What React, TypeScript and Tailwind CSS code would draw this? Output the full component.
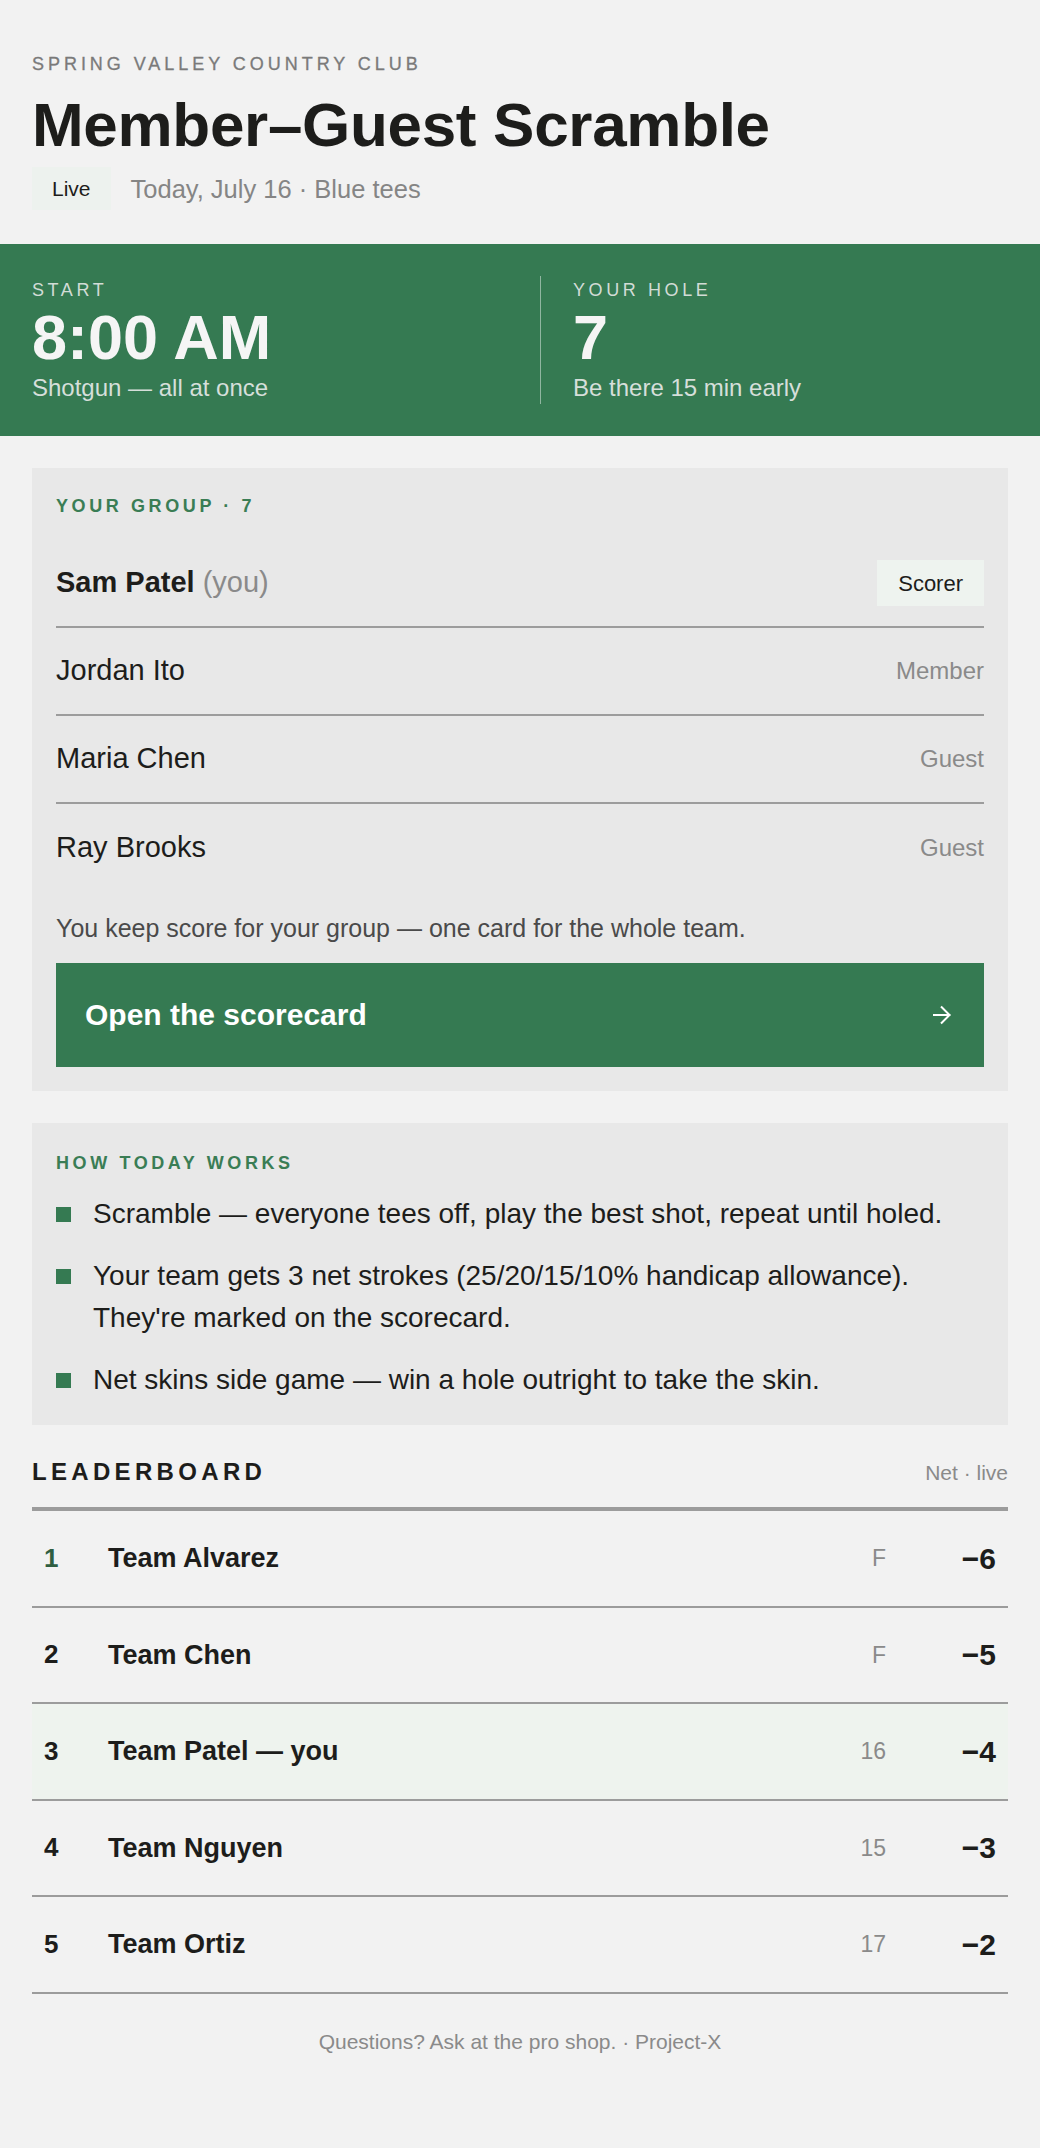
import React from 'react';

const group = [
  { name: 'Sam Patel', you: true, role: 'Scorer' },
  { name: 'Jordan Ito', role: 'Member' },
  { name: 'Maria Chen', role: 'Guest' },
  { name: 'Ray Brooks', role: 'Guest' },
];

const rules = [
  'Scramble — everyone tees off, play the best shot, repeat until holed.',
  "Your team gets 3 net strokes (25/20/15/10% handicap allowance). They're marked on the scorecard.",
  'Net skins side game — win a hole outright to take the skin.',
];

const board = [
  { pos: 1, team: 'Team Alvarez', thru: 'F', score: '−6' },
  { pos: 2, team: 'Team Chen', thru: 'F', score: '−5' },
  { pos: 3, team: 'Team Patel — you', thru: '16', score: '−4', me: true },
  { pos: 4, team: 'Team Nguyen', thru: '15', score: '−3' },
  { pos: 5, team: 'Team Ortiz', thru: '17', score: '−2' },
];

function ArrowIcon() {
  return (
    <svg width="20" height="20" viewBox="0 0 20 20" fill="none" stroke="currentColor" strokeWidth="2">
      <path d="M1 10h17.5M9 1.5l8.5 8.5-8.5 8.5" />
    </svg>
  );
}

export default function App() {
  return (
    <div className="min-h-screen bg-[#f2f2f2] text-[#1d1d1b] font-['Liberation_Sans',Arial,sans-serif] pb-20">
      {/* header */}
      <header className="px-8 pt-[51px]">
        <p className="text-[18px] leading-[27px] tracking-[0.22em] text-[#7a7a7a] uppercase [-webkit-text-stroke:0.3px_#7a7a7a]">
          Spring Valley Country Club
        </p>
        <h1 className="mt-[13px] text-[62px] leading-[1.1] font-bold tracking-[-0.005em]">
          Member–Guest Scramble
        </h1>
        <div className="mt-[8px] flex items-center gap-5">
          <span className="h-[43px] px-5 flex items-center bg-[#edf2ee] text-[21px]">Live</span>
          <span className="text-[25.5px] text-[#858585]">Today, July 16 · Blue tees</span>
        </div>
      </header>

      {/* tee time banner */}
      <section className="mt-[34px] bg-[#357a52] px-8 py-8">
        <div className="grid grid-cols-2 gap-10">
          <div>
            <p className="text-[18px] leading-[29px] tracking-[0.2em] text-[#d2dcd6]">START</p>
            <p className="mt-px text-[63px] leading-[62px] font-bold text-[#f5f5f5]">8:00 AM</p>
            <p className="mt-[3px] text-[24px] leading-[33px] text-[#d6dfda]">Shotgun — all at once</p>
          </div>
          <div className="border-l border-white/45 pl-8">
            <p className="text-[18px] leading-[29px] tracking-[0.2em] text-[#d2dcd6]">YOUR HOLE</p>
            <p className="mt-px text-[63px] leading-[62px] font-bold text-[#f5f5f5]">7</p>
            <p className="mt-[3px] text-[24px] leading-[33px] text-[#d6dfda]">Be there 15 min early</p>
          </div>
        </div>
      </section>

      <main className="px-8">
        {/* group */}
        <section className="mt-8 bg-[#e8e8e8] p-6">
          <p className="text-[18px] leading-[28px] tracking-[0.2em] font-bold text-[#3a7d55]">YOUR GROUP · 7</p>
          <ul className="mt-5">
            {group.map((p, i) => (
              <li
                key={p.name}
                className={`flex items-center justify-between h-[88px] ${i < group.length - 1 ? 'border-b-2 border-[#9c9c9c]' : ''}`}
              >
                <span className="text-[29px]">
                  {p.you ? (
                    <>
                      <span className="font-bold">{p.name}</span>{' '}
                      <span className="text-[#8a8a8a]">(you)</span>
                    </>
                  ) : (
                    p.name
                  )}
                </span>
                {p.role === 'Scorer' ? (
                  <span className="h-[46px] px-[21px] flex items-center bg-[#eef3ef] text-[22px]">Scorer</span>
                ) : (
                  <span className="text-[24px] text-[#8a8a8a]">{p.role}</span>
                )}
              </li>
            ))}
          </ul>
          <p className="mt-[18px] text-[25px] leading-[1.5] text-[#4a4a4a]">
            You keep score for your group — one card for the whole team.
          </p>
          <button className="mt-[15px] w-full h-[104px] pl-[29px] pr-8 flex items-center justify-between bg-[#357a52] text-white">
            <span className="text-[30px] font-bold">Open the scorecard</span>
            <ArrowIcon />
          </button>
        </section>

        {/* how it works */}
        <section className="mt-8 bg-[#e8e8e8] p-6">
          <p className="mt-[2px] text-[18px] leading-[28px] tracking-[0.2em] font-bold text-[#3a7d55]">HOW TODAY WORKS</p>
          <ul className="mt-[16px] flex flex-col gap-5">
            {rules.map((r) => (
              <li key={r} className="flex items-start gap-[22px]">
                <span className="mt-[14px] w-[15px] h-[15px] shrink-0 bg-[#357a52]" />
                <span className="text-[28px] leading-[42px]">{r}</span>
              </li>
            ))}
          </ul>
        </section>

        {/* leaderboard */}
        <section className="mt-[31px]">
          <div className="flex items-baseline justify-between pb-[19px] border-b-4 border-[#9c9c9c]">
            <h2 className="text-[24px] leading-[1.3] font-bold tracking-[0.18em]">LEADERBOARD</h2>
            <span className="text-[21px] text-[#8a8a8a]">Net · live</span>
          </div>
          {board.map((t) => (
            <div
              key={t.pos}
              className={`grid grid-cols-[64px_1fr_60px_110px] items-center h-[96.5px] px-3 border-b-2 border-[#9c9c9c] ${t.me ? 'bg-[#eef3ee]' : ''}`}
            >
              <span className={`text-[26px] font-bold ${t.pos === 1 ? 'text-[#2f5e41]' : ''}`}>{t.pos}</span>
              <span className="text-[27px] font-bold">{t.team}</span>
              <span className="text-[23px] text-[#8a8a8a] text-right">{t.thru}</span>
              <span className="text-[30px] font-bold text-right">{t.score}</span>
            </div>
          ))}
        </section>

        <p className="mt-8 text-center text-[21px] leading-[1.5] text-[#8a8a8a]">
          Questions? Ask at the pro shop. · Project-X
        </p>
      </main>
    </div>
  );
}
